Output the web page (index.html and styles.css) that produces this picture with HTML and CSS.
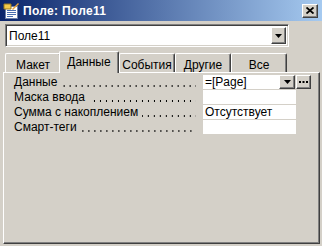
FILE: index.html
```html
<!DOCTYPE html>
<html lang="ru">
<head>
  <meta charset="UTF-8" />
  <meta name="viewport" content="width=device-width, initial-scale=1.0"/>
  <title>Поле: Поле11</title>
  <link rel="stylesheet" href="styles.css">
</head>
<body>
  <div class="window">
    <div class="titlebar">
      <svg class="title-icon" width="16" height="16" viewBox="0 0 16 16">
        <rect x="2.5" y="3.5" width="12" height="12" fill="#fff" stroke="#6a7fa8"/>
        <rect x="4" y="7" width="9" height="1" fill="#4a6fb0"/>
        <rect x="4" y="9" width="9" height="1" fill="#4a6fb0"/>
        <rect x="4" y="11" width="9" height="1" fill="#4a6fb0"/>
        <rect x="4" y="13" width="6" height="1" fill="#4a6fb0"/>
        <path d="M1 1 L8 1 L8 6 L1 6 Z" fill="#f2c94c" stroke="#9a7a20"/>
        <path d="M9 6 L15 0 L16 1 L10 7 Z" fill="#e8a33c"/>
      </svg>
      <span class="title-text">Поле: Поле11</span>
      <div class="close-btn">
        <svg width="8" height="7" viewBox="0 0 8 7">
          <path d="M0.5 0.5 L7.5 6.5 M7.5 0.5 L0.5 6.5" stroke="#000" stroke-width="1.8"/>
        </svg>
      </div>
    </div>

    <div class="combo">
      <span class="combo-text">Поле11</span>
      <div class="btn drop-btn">
        <svg width="7" height="4" viewBox="0 0 7 4"><path d="M0 0 H7 L3.5 4 Z" fill="#000"/></svg>
      </div>
    </div>

    <div class="tabs">
      <div class="tab">Макет</div>
      <div class="tab active">Данные</div>
      <div class="tab">События</div>
      <div class="tab">Другие</div>
      <div class="tab">Все</div>
    </div>

    <div class="panel">
      <div class="row">
        <div class="label"><span>Данные</span><span class="dots"></span></div>
        <div class="value with-btns">
          <span class="value-box">=[Page]</span>
          <div class="btn small-btn">
            <svg width="7" height="4" viewBox="0 0 7 4"><path d="M0 0 H7 L3.5 4 Z" fill="#000"/></svg>
          </div>
          <div class="btn small-btn builder">
            <svg width="9" height="2" viewBox="0 0 9 2">
              <rect x="0" y="0" width="2" height="2" fill="#000"/>
              <rect x="3.5" y="0" width="2" height="2" fill="#000"/>
              <rect x="7" y="0" width="2" height="2" fill="#000"/>
            </svg>
          </div>
        </div>
      </div>
      <div class="row">
        <div class="label"><span>Маска ввода</span><span class="dots"></span></div>
        <div class="value"><span class="value-box"></span></div>
      </div>
      <div class="row">
        <div class="label"><span>Сумма с накоплением</span><span class="dots"></span></div>
        <div class="value"><span class="value-box">Отсутствует</span></div>
      </div>
      <div class="row">
        <div class="label"><span>Смарт-теги</span><span class="dots"></span></div>
        <div class="value"><span class="value-box"></span></div>
      </div>
    </div>
  </div>
</body>
</html>
```

FILE: styles.css
```css
* {
  box-sizing: border-box;
  margin: 0;
  padding: 0;
}

body {
  background: #d4d0c8;
  font-family: 'Liberation Sans', Arial, sans-serif;
  font-size: 11px;
  color: #000;
}

.window {
  width: 322px;
  height: 246px;
  display: flex;
  flex-direction: column;
  background: #d4d0c8;
}

/* Заголовок окна */
.titlebar {
  height: 21px;
  display: flex;
  align-items: center;
  padding-left: 3px;
  background: linear-gradient(to right, #0a246a, #a6caf0);
}

.title-icon {
  flex: none;
}

.title-text {
  margin-left: 4px;
  color: #fff;
  font-weight: bold;
  font-size: 12px;
  letter-spacing: 0.3px;
}

.close-btn {
  margin-left: auto;
  margin-right: 4px;
  width: 16px;
  height: 14px;
  display: flex;
  align-items: center;
  justify-content: center;
  background: #d4d0c8;
  border: 1px solid;
  border-color: #fff #404040 #404040 #fff;
  box-shadow: inset -1px -1px #808080;
}

/* Кнопки */
.btn {
  display: flex;
  align-items: center;
  justify-content: center;
  background: #d4d0c8;
  border: 1px solid;
  border-color: #fff #404040 #404040 #fff;
  box-shadow: inset -1px -1px #808080;
}

/* Поле со списком */
.combo {
  margin: 3px 33px 0 5px;
  height: 23px;
  display: flex;
  align-items: center;
  background: #fff;
  border: 1px solid;
  border-color: #808080 #fff #fff #808080;
  box-shadow: inset 1px 1px #404040, inset -1px -1px #d4d0c8;
  padding: 2px;
}

.combo-text {
  flex: 1;
  padding-left: 1px;
  font-size: 12px;
}

.drop-btn {
  width: 15px;
  height: 17px;
}

/* Вкладки */
.tabs {
  margin-top: 5px;
  height: 20px;
  display: flex;
  align-items: flex-end;
  padding-left: 5px;
  position: relative;
  z-index: 1;
}

.tab {
  width: 56px;
  height: 19px;
  display: flex;
  align-items: center;
  justify-content: center;
  padding-top: 3px;
  border-top: 1px solid #fff;
  border-left: 1px solid #fff;
  border-right: 1px solid #404040;
  border-radius: 2px 2px 0 0;
  box-shadow: inset -1px 0 #808080;
  font-size: 12px;
}

.tab.active {
  height: 22px;
  width: 60px;
  margin: 0 -1px -1px -2px;
  padding-top: 0;
  padding-bottom: 2px;
  background: #d4d0c8;
}

.tab.active + .tab {
  margin-left: 1px;
}

/* Панель свойств */
.panel {
  flex: 1;
  margin: 0 2px 2px 3px;
  padding: 2px 0 0 10px;
  border: 1px solid;
  border-color: #fff #404040 #404040 #fff;
  box-shadow: inset -1px -1px #808080;
  display: flex;
  flex-direction: column;
  gap: 1px;
}

.row {
  height: 14px;
  display: flex;
}

.label {
  width: 189px;
  display: flex;
  align-items: center;
  white-space: nowrap;
  font-size: 12px;
}

.dots {
  flex: 1;
  align-self: flex-end;
  height: 2px;
  margin: 0 7px 2px 4px;
  background-image: linear-gradient(to right, #000 1px, transparent 1px);
  background-size: 6px 2px;
  background-position: right top;
}

.value {
  width: 93px;
  display: flex;
}

.value-box {
  flex: 1;
  background: #fff;
  padding-left: 2px;
  font-size: 12px;
  line-height: 14px;
}

.value.with-btns {
  width: 108px;
}

.small-btn {
  width: 16px;
  height: 14px;
}

.builder {
  margin-left: 1px;
  width: 15px;
}
```
